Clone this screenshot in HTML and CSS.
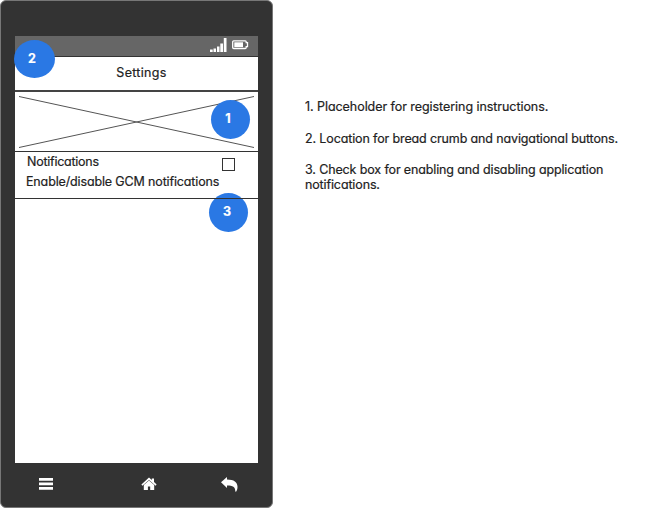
FILE: index.html
```
<!DOCTYPE html>
<html lang="en">
<head>
<meta charset="utf-8">
<title>Settings</title>
<link rel="stylesheet" href="styles.css">
</head>
<body>
<main class="page">
  <section class="phone">
    <div class="screen">
      <div class="status">
        <svg width="17" height="15" viewBox="0 0 17 15" fill="#fff"><path d="M0 11.500h2.700v2.500H0zM3.500 10.500h2.500v3.500H3.500zM7 8.500h2.500V14H7zM10.300 5.500h2.700V14h-2.700zM13.800 0h2.700v14h-2.700z"/></svg>
        <svg class="battery" width="17" height="10" viewBox="0 0 17 10"><path d="M1.700.8h11.500q1 0 1 1v.8h1.300v4h-1.300v.9q0 1-1 1H1.700q-1 0-1-1V1.800q0-1 1-1z" fill="none" stroke="#fff" stroke-width="1.300"/><path d="M2.300 2.300h8.700v4.800H2.300z" fill="#fff"/></svg>
      </div>
      <h1 class="title"><span>Settings</span></h1>
      <div class="placeholder">
        <svg width="243" height="59" viewBox="0 0 243 59" stroke="#555" fill="none"><path d="M4 4.500 239 55.500M4 55.500 239 4.500"/></svg>
      </div>
      <div class="option">
        <div class="option-row"><span class="name">Notifications</span><span class="check"></span></div>
        <div class="detail">Enable/disable GCM notifications</div>
      </div>
    </div>
    <nav class="nav">
      <svg width="14" height="14" viewBox="0 0 14 14" fill="#fff"><path d="M0 1h14v2.700H0zM0 5.500h14v2.700H0zM0 10h14v2.700H0z"/></svg>
      <svg class="home" width="16" height="14" viewBox="0 0 16 14" fill="#fff"><path d="M8 .6 10.800 3V1.500h2.200v3.600L15.600 7.500l-1 1.200L8 2.900 1.400 8.700l-1-1.200z"/><path d="M8 3.400 13.200 8V13H9.200V9.500H6.900V13H2.800V8z"/></svg>
      <svg class="back" width="17" height="15" viewBox="0 0 17 15" fill="#fff"><path d="M0 5.300 6 0v2.500c7 0 10.500 2.800 10.500 7.200 0 2-.5 3.500-1.300 4.700-.4.500-1 .3-.9-.3C14.200 9.900 12 8.500 6 8.500V11z"/></svg>
    </nav>
    <span class="badge one">1</span>
    <span class="badge two">2</span>
    <span class="badge three">3</span>
  </section>
  <section class="notes">
    <p class="n1">1. Placeholder for registering instructions.</p>
    <p class="n2">2. Location for bread crumb and navigational buttons.</p>
    <p class="n3">3. Check box for enabling and disabling application<br>notifications.</p>
  </section>
</main>
</body>
</html>
```
FILE: styles.css
```
* { box-sizing: border-box; }
body { margin: 0; background: #fff; color: #222; font-family: Inter, "Liberation Sans", sans-serif; font-size: 12.5px; line-height: 15px; font-feature-settings: "cv11" 1; -webkit-text-stroke: 0.2px; }
svg { display: block; flex: none; }
.page { display: flex; width: 664px; height: 508px; overflow: hidden; }
.phone { position: relative; flex: none; width: 273px; height: 508px; padding: 35px 14px 0; background: #333; border: 1px solid #777; border-radius: 6px; }
.screen { width: 243px; height: 427px; background: #fff; }
.status { display: flex; height: 21px; padding: 2px 10px 0 195px; gap: 5px; background: #666; border-bottom: 1px solid #333; }
.battery { margin-top: 2px; }
.title { margin: 0; height: 35px; padding-top: 8px; padding-left: 10px; text-align: center; font-size: 12.5px; font-weight: 400; letter-spacing: 0.3px; border-bottom: 2px solid #444; }
.placeholder { height: 60px; border-bottom: 1px solid #333; }
.option { height: 47px; padding: 2px 0 0 11px; border-bottom: 1px solid #333; letter-spacing: -0.14px; }
.option-row { display: flex; justify-content: space-between; height: 20px; padding-left: 1px; }
.name { letter-spacing: -0.25px; }
.check { width: 13px; height: 13px; margin: 4px 23px 0 0; border: 1px solid #333; }
.nav { display: flex; align-items: flex-start; padding: 14px 0 0 24px; }
.home { margin-left: 88px; }
.back { margin-left: 64px; }
.badge { position: absolute; display: flex; justify-content: center; width: 39px; height: 39px; padding: 11px 5px 0 0; border-radius: 50%; background: #2a78e4; color: #fff; font-size: 12.5px; font-weight: 700; }
.one { left: 210px; top: 99px; }
.two { left: 13px; top: 39px; width: 41px; height: 38px; }
.three { left: 208px; top: 192px; padding-right: 3px; background: linear-gradient(#2a78e4 5px, #333 5px, #333 6px, #2a78e4 6px); }
.notes { padding: 99px 0 0 32px; white-space: nowrap; letter-spacing: -0.13px; }
.notes p { margin: 0 0 17px; }
.notes .n1 { letter-spacing: -0.055px; }
.notes .n2 { margin-bottom: 16px; }
```
